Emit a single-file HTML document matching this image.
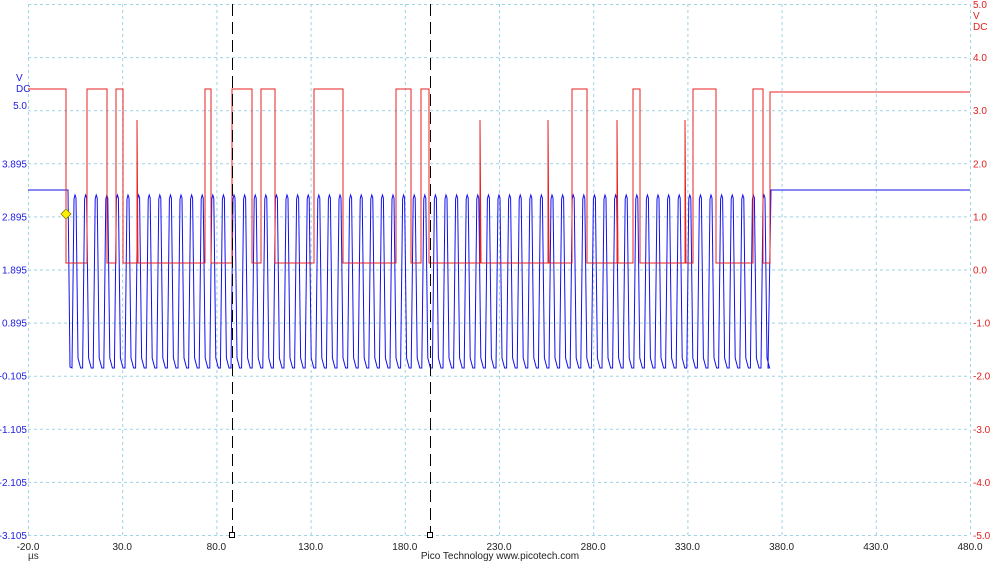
<!DOCTYPE html>
<html><head><meta charset="utf-8"><style>
html,body{margin:0;padding:0;background:#fff;width:999px;height:562px;overflow:hidden}
svg{display:block;font-family:"Liberation Sans","DejaVu Sans",sans-serif;font-size:10px}
</style></head><body>
<svg id="s" width="999" height="562" viewBox="0 0 999 562" xmlns="http://www.w3.org/2000/svg">
<g id="grid" stroke="#9fd3e6" stroke-width="1" stroke-dasharray="3,3"></g>
<g id="lbl"></g>
<path id="blue" fill="none" stroke="#1010f0" stroke-width="1"/>
<path id="red" fill="none" stroke="#e82020" stroke-width="1"/>
<g stroke="#000" stroke-width="1" stroke-dasharray="12,6">
<line x1="232.5" y1="4" x2="232.5" y2="532"/>
<line x1="430.5" y1="4" x2="430.5" y2="532"/>
</g>
<rect x="229.5" y="532.5" width="5" height="5" fill="#fff" stroke="#000"/>
<rect x="427.5" y="532.5" width="5" height="5" fill="#fff" stroke="#000"/>
<polygon points="66,209 71,214 66,219 61,214" fill="#ffee00" stroke="#8a7a00" stroke-width="0.8"/>
<text x="16" y="81" fill="#2020e0">V</text>
<text x="16" y="92" fill="#2020e0">DC</text>
<text x="973" y="19" fill="#e02020">V</text>
<text x="973" y="30" fill="#e02020">DC</text>
<text x="28" y="559" fill="#333">µs</text>
<text x="500" y="559" fill="#222" text-anchor="middle">Pico Technology   www.picotech.com</text>
</svg>
<script>
var ns="http://www.w3.org/2000/svg";
var g=document.getElementById('grid'),L=document.getElementById('lbl');
function el(p,t,a,txt){var e=document.createElementNS(ns,t);for(var k in a)e.setAttribute(k,a[k]);if(txt)e.textContent=txt;p.appendChild(e);return e;}
var x0=28,x1=970,y0=4,y1=535;
for(var i=0;i<=10;i++){var x=x0+(x1-x0)*i/10;el(g,'line',{x1:x+.5,y1:y0,x2:x+.5,y2:y1});
 var y=y0+(y1-y0)*i/10;el(g,'line',{x1:x0,y1:y+.5,x2:x1,y2:y+.5});
 el(L,'text',{x:x1+3,y:y+4,fill:'#e02020'},(5-i).toFixed(1));
 el(L,'text',{x:x,y:550,fill:'#222','text-anchor':'middle'},(-20+50*i).toFixed(1));
}
var lv=["5.0","3.895","2.895","1.895","0.895","-0.105","-1.105","-2.105","-3.105"];
for(var i=0;i<lv.length;i++){var y=y0+(y1-y0)*(i+2)/10;if(i==0)y=105;el(L,'text',{x:27,y:y+4,fill:'#2020e0','text-anchor':'end'},lv[i]);}
// blue clock
var d="M28,190 L68,190 L70,367";var x=70,per=10.6,hi=195,lo=368;
while(x+per<=770){d+=" L"+(x+2).toFixed(1)+","+lo+" L"+(x+4).toFixed(1)+","+(hi+4)+" L"+(x+5).toFixed(1)+","+hi+" L"+(x+6).toFixed(1)+","+(hi+3)+" L"+(x+8).toFixed(1)+","+(lo-10)+" L"+(x+per).toFixed(1)+","+lo;x+=per;}
d+=" L768,"+lo+" L771,190 L970,190";
document.getElementById('blue').setAttribute('d',d);
// red
var H=89,Lo=263;
var tr=[[28,66,H],[66,87,Lo],[87,107,H],[107,116,Lo],[116,123,H],[123,205,Lo],[205,211,H],[211,232,Lo],[232,252,H],[252,261,Lo],[261,275,H],[275,314,Lo],[314,343,H],[343,396,Lo],[396,411,H],[411,421,Lo],[421,429,H],[429,572,Lo],[572,587,H],[587,633,Lo],[633,640,H],[640,693,Lo],[693,716,H],[716,753,Lo],[753,763,H],[763,770,Lo],[770,970,92]];
var r="";
for(var i=0;i<tr.length;i++){var t=tr[i];r+=(i?" L":"M")+t[0]+","+t[2]+" L"+t[1]+","+t[2];}
var sp=[137,480,548,617,685];
for(var i=0;i<sp.length;i++)r+=" M"+sp[i]+","+Lo+" L"+sp[i]+",120 L"+(sp[i]+1)+","+Lo;
document.getElementById('red').setAttribute('d',r);
</script>
</body></html>
